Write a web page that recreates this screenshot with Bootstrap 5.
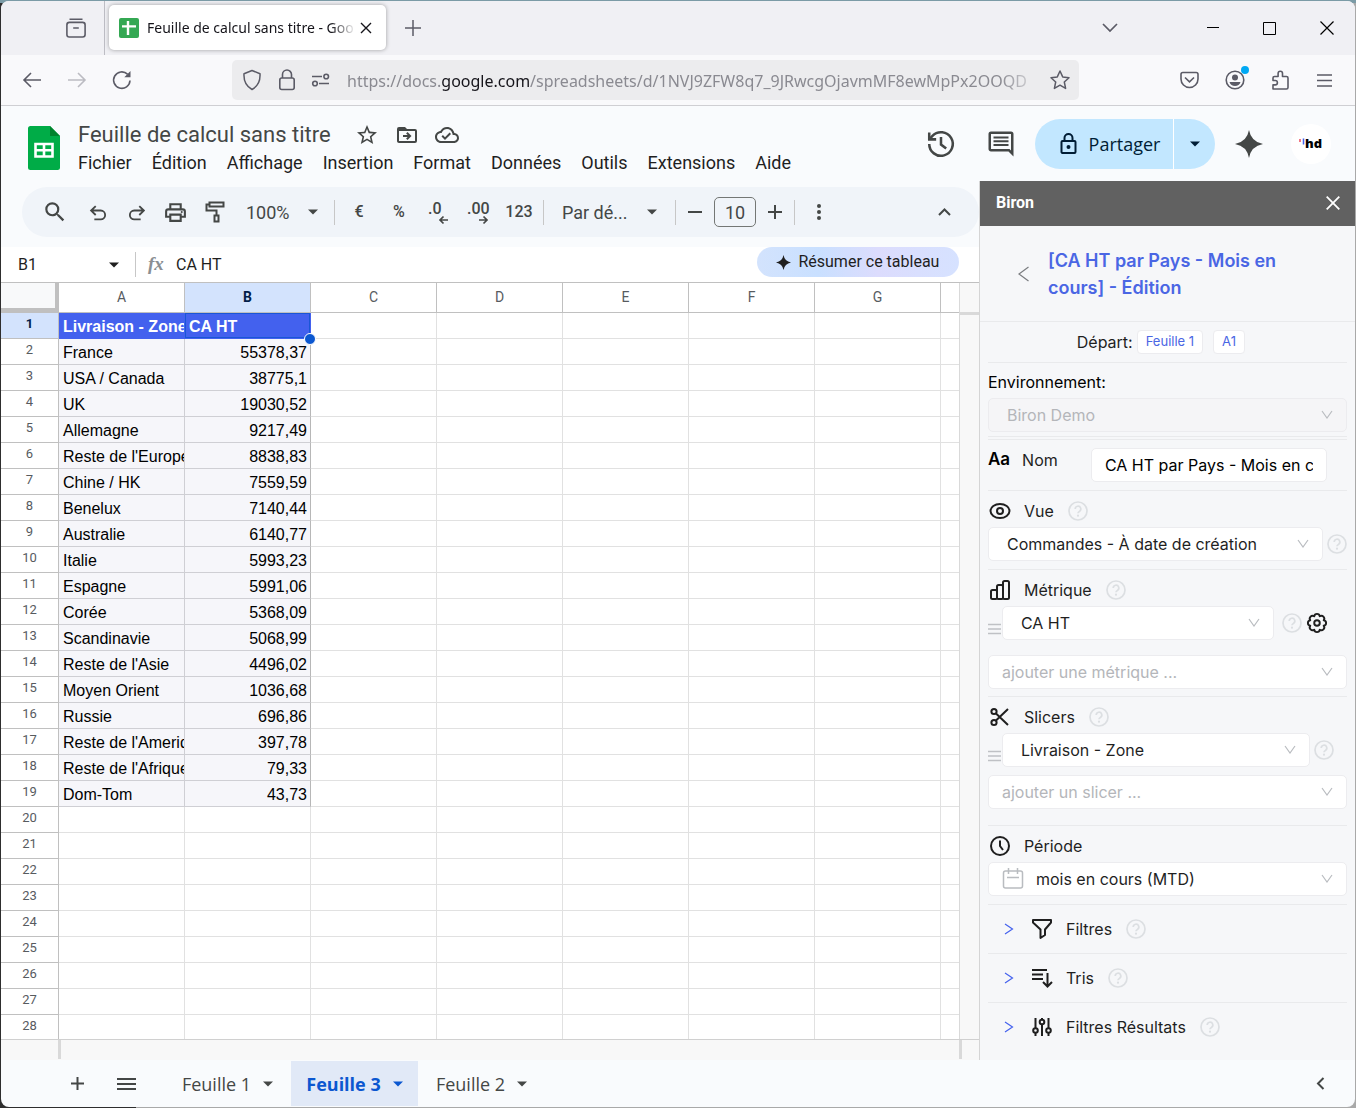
<!DOCTYPE html>
<html lang="fr">
<head>
<meta charset="utf-8">
<meta name="viewport" content="width=device-width, initial-scale=1">
<title>Feuille de calcul sans titre - Google Sheets</title>
<link href="https://cdn.jsdelivr.net/npm/bootstrap@5.3.0/dist/css/bootstrap.min.css" rel="stylesheet">
<style>
:root{--ink:#444746;--line:#e1e1e1;--blue:#4361ee;--rule:#e9eaec}
body{height:100vh;background:linear-gradient(#7b9ba6 0 3px,transparent 3px),linear-gradient(90deg,#2e2e2e 10%,#a9a9a9 10%);font-family:Roboto,"Liberation Sans",sans-serif;color:#1f1f1f;padding:1px;overflow:hidden}
svg{display:block;flex:none;overflow:visible}
button{flex:none;border:0;background:none;color:inherit;padding:0;display:inline-flex;align-items:center;justify-content:center}
select{appearance:none;border:0;background:none;color:inherit;outline:0}
.ln{fill:none;stroke:currentColor;stroke-width:2}
.window{height:100%;border-radius:8px;overflow:hidden;background:#f9fbfd}
.workarea,.namebox{min-height:0}
.shrinkable{min-width:0}
/* browser chrome */
.tabstrip{height:54px;background:#f0f0f4;color:#5b5b66}
.chrome-font{font-family:"Noto Sans","Open Sans",sans-serif}
.pinned{width:104px;border-right:1px solid #bdbdc4;padding-right:18px}
.browser-tab{width:277px;height:45px;margin:4px;border-radius:5px;background:#fff;box-shadow:0 0 4px rgba(0,0,0,.35);color:#15141a;font-size:14px;padding:0 10px}
.fade-end{overflow:hidden;white-space:nowrap;mask-image:linear-gradient(90deg,#000 88%,transparent);-webkit-mask-image:linear-gradient(90deg,#000 88%,transparent)}
.winbtn{width:57px;height:54px;color:#000}
.navstrip{height:51px;background:#f9f9fb;border-bottom:1px solid #cfcfd3;color:#5b5b66;padding:0 8px}
.navbtn{width:45px;height:40px}
.urlbar{height:40px;background:#ececee;border-radius:5px;margin-left:88px;margin-right:88px;padding:0 9px;min-width:0}
.url-text{font-size:16px;color:#8a8a91;text-decoration:none;padding-top:2px;mask-image:linear-gradient(90deg,#000 94%,transparent);-webkit-mask-image:linear-gradient(90deg,#000 94%,transparent)}
.url-text b{font-weight:400;color:#15141a}
.dot-new{position:absolute;top:6px;right:8px;width:8px;height:8px;border-radius:50%;background:#00a9f4}
/* app header */
.apphead{height:75px;padding:0 24px 0 27px}
.doc-block{margin:15px 0 0 18px;gap:2px}
.doc-title{font-size:22px;line-height:28px;color:var(--ink);margin:0;font-weight:400}
.doc-actions{color:var(--ink)}
.menus{gap:20px}
.menus a{font-size:18px;line-height:24px;color:#1f1f1f;text-decoration:none}
.roundbtn{width:52px;height:48px;color:var(--ink)}
.share{height:50px;border-radius:25px;background:#c2e7ff;color:#001d35;overflow:hidden}
.share-main{width:139px;gap:12px;padding-left:12px;font:500 18px "Open Sans",sans-serif;border-right:1px solid #fff;height:50px}
.share-more{width:41px;height:50px}
.avatar{width:40px;height:40px;border-radius:50%;background:#fff}
/* toolbar */
.toolbar-wrap{padding:0 0 10px 21px}
.toolpill{height:50px;margin-top:6px;border-radius:25px;background:#f0f4f9;color:var(--ink);padding:0 14px 0 13px;font-size:18px}
.tool{width:39px;height:36px}
.fmt{width:40px;height:36px;font-size:16px;font-weight:500}
.vsep{width:1px;height:25px;background:#c7c7c7;margin:0 4px;flex:none}
.pick{position:relative;flex:none}
.pick select{width:100%;height:100%}
.pick svg{position:absolute;right:12px;top:50%;transform:translateY(-50%);pointer-events:none}
.zoompick{width:96px;height:36px}.zoompick select{padding-left:12px}
.fontpick{width:123px;height:36px}.fontpick select{padding-left:14px}
.fontpick svg{right:14px}
.sizebox{width:42px;height:30px;border:1px solid #747775;border-radius:5px;background:none;text-align:center;color:inherit;margin:0 4px;padding:0}
/* formula bar */
.formula{height:36px;background:#fff;border-bottom:1px solid #c0c0c0;padding:0 20px 0 17px;font-size:16px}
.formula input{border:0;outline:0;background:none;padding:0;color:#1f1f1f}
.namebox{height:35px;flex:1 1 0}
.cellref{width:91px}
.summary{height:30px;width:202px;border-radius:15px;background:linear-gradient(90deg,#d3e3fd,#c9e0ff 30%,#dcdcfd 60%,#d6e2ff);gap:7px;font-size:16px;color:#1f1f1f}
/* grid */
.gridbox{flex:1 1 0;min-height:0;overflow:hidden;background:#fff}
.cells{flex:1 1 0;min-width:0;table-layout:fixed;width:100%;border-collapse:separate;border-spacing:0}
.cells .c-num{width:58px}
.cells .c-std{width:126px}
.cells th,.cells td{height:26px;padding:2px 3px 0 4px;border:solid var(--line);border-width:0 1px 1px 0;overflow:hidden;white-space:nowrap}
.cells thead th{height:30px;padding:0;line-height:27px;text-align:center;font-weight:400;font-size:14px;color:#575b5f;border-color:#c0c0c0}
.cells tbody th{font-weight:400;font-size:13px;line-height:21px;vertical-align:top;text-align:center;color:#575b5f;border-color:#c0c0c0;padding:0}
.cells td{font:16px/23px "Liberation Sans",Arial,sans-serif;color:#000}
.cells thead .corner{background:#f8f9fa;border-right:4px solid #c0c0c0;border-bottom:5px solid #c0c0c0}
.cells thead .on,.cells tbody .on{background:#d3e3fd;color:#041e49;font-weight:700}
.cells .filled{background:#f6f6fa;border-color:#cfcfd4}
.cells .num{text-align:right;border-right-color:#b7b7b7}
.cells .headcell{background:var(--blue);color:#fff;font-weight:700;border-color:var(--blue)}
.cells .picked{position:relative;overflow:visible;box-shadow:inset 0 0 0 1px #1a56d6}
.handle{position:absolute;right:-6px;bottom:-7px;width:12px;height:12px;border-radius:50%;background:#0b57d0;border:1px solid #fff;z-index:1}
.vscroll{width:20px;background:#f8f8f8;border-left:1px solid #d9d9d9;margin-left:-1px;flex:none}
.vscroll div{height:32px;border-bottom:3px solid #d9d9d9}
.hscroll{height:21px;border-top:1px solid #d0d0d0;background:#f8f8f8;padding:0 17px 0 57px}
.hscroll i{width:3px;background:#d9d9d9;height:19px}
/* side panel */
.sidebar-app{width:376px;flex:none;border-left:1px solid #d5d5d5;background:#f6f7f9;font-family:Inter,"Open Sans",sans-serif;font-size:16px}
.side-top{height:45px;background:#616161;color:#fff;font:700 16px Roboto,sans-serif;padding:0 15px 2px 16px}
.side-title{height:96px;padding:0 40px 0 38px;border-bottom:1px solid var(--rule)}
.side-title button{margin-right:18px;color:#7b7d80}
.side-title h2{font-size:18px;line-height:27px;font-weight:600;color:#4a66e4;margin:0}
.tagbtn{height:24px;background:#fff;border:1px solid #ececef;border-radius:4px;color:#4a66e4;font-size:13px;padding:0 8px}
.tagbtn+.tagbtn{margin-left:10px}
.sect{margin:0 8px;border-bottom:1px solid var(--rule);padding:8px 0}
.depart{height:41px;padding:0 102px 0 0}
.sect-env{padding:7px 0 4px;margin-bottom:2px}
.sect-nom{border-top:1px solid var(--rule)}
.sect-met{padding-bottom:7px}
.sect-sli{padding-bottom:16px}
.sect-head{height:24px;margin-bottom:4px}
.sect-head label{margin-left:12px}
.sect-head .help{margin-left:14px}
.aa{font-size:17px;font-weight:600;color:#000}
.help{color:#dcdfe2}
.field{position:relative;height:34px;flex:1 1 0;min-width:0}
.field select{width:100%;height:34px;background:#fff;border:1px solid #ececef;border-radius:5px;padding:0 40px 0 18px;opacity:1}
.field>svg{position:absolute;right:14px;top:12px;color:#b9bcc0;pointer-events:none}
.field .lead-ico{left:14px;right:auto;top:6px}
.field .ghost{color:#b4b6ba;padding-left:13px}
.field .off{background:#f5f5f7;color:#b4b6ba}
.field .dated{padding-left:47px}
.field-next{margin-top:15px}
.nomfield{width:236px;height:34px;background:#fff;border:1px solid #ececef;border-radius:5px;padding:0 13px;margin-right:20px}
.gearbtn{margin:0 19px 0 4px}
.help-end{margin:0 13px 0 4px}
.fold{height:49px;margin:0 8px;padding:0 0 1px 16px;border-bottom:1px solid var(--rule)}
.fold:last-child{border-bottom:0}
.fold a{color:#1f1f1f;text-decoration:none;margin:0 14px 0 12px}
.menugrip{width:14px;padding-top:12px;color:#bfc1c5}
/* sheet tabs */
.sheetbar{height:47px;padding:0 26px 0 56px;color:var(--ink)}
.allsheets{margin:0 18px 0 9px}
.sheet{height:45px;font:500 18px "Open Sans",sans-serif;width:127px;gap:12px;flex:none}
.sheet.current{background:#e1e9f7;color:#0b57d0;font-weight:700}
</style>
</head>
<body>
<svg width="0" height="0" class="position-absolute" aria-hidden="true"><defs>
<symbol id="help" viewBox="0 0 20 20"><g fill="none" stroke="currentColor" stroke-width="1.7"><circle cx="10" cy="10" r="9"/><path d="M7.2 8a2.8 2.8 0 1 1 4.2 2.4c-.9.5-1.4.9-1.4 1.9"/></g><circle cx="10" cy="14.7" r="1.1" fill="currentColor"/></symbol>
<symbol id="vee" viewBox="0 0 12 9"><path d="M1 1l5 7 5-7" fill="none" stroke="currentColor" stroke-width="1.2"/></symbol>
<symbol id="chev" viewBox="0 0 10 12"><path d="M1 1l7.500 5L1 11" fill="none" stroke="#4361ee" stroke-width="1.2"/></symbol>
<symbol id="tri" viewBox="0 0 10 6"><path d="M0 .5h10L5 5.5z" fill="currentColor"/></symbol>
<symbol id="grip" viewBox="0 0 13 12"><path d="M0 1.5h13M0 6h13M0 10.5h13" stroke="currentColor" stroke-width="1.4"/></symbol>
<symbol id="spark" viewBox="0 0 24 24"><path d="M12 0Q13.8 10.2 24 12 13.8 13.8 12 24 10.2 13.8 0 12 10.2 10.2 12 0z" fill="currentColor"/></symbol>
</defs></svg>

<div class="window d-flex flex-column">
  <div class="tabstrip d-flex chrome-font flex-shrink-0">
    <div class="pinned d-flex align-items-center flex-shrink-0 justify-content-end"><button aria-label="Onglets récents"><svg width="20" height="20" viewBox="0 0 20 20" fill="none" stroke="currentColor" stroke-width="1.6"><path d="M3.5 1.2h13"/><rect x=".9" y="4.4" width="18.2" height="14.6" rx="2.5"/><path d="M7.2 10h5.6"/></svg></button></div>
    <div class="browser-tab d-flex align-items-center flex-shrink-0">
      <svg width="20" height="20" viewBox="0 0 20 20"><rect width="20" height="20" rx="2" fill="#34a853"/><path d="M9 3v14M3 8.4h14" stroke="#fff" stroke-width="2.4" fill="none"/></svg>
      <span class="fade-end flex-fill ms-2">Feuille de calcul sans titre - Goo</span>
      <button aria-label="Fermer l’onglet" class="ms-1 me-1"><svg width="12" height="12" viewBox="0 0 12 12" stroke="currentColor" stroke-width="1.4"><path d="M1 1l10 10M11 1L1 11"/></svg></button>
    </div>
    <button aria-label="Nouvel onglet" class="navbtn h-100"><svg width="16" height="16" viewBox="0 0 16 16" stroke="currentColor" stroke-width="1.5"><path d="M8 0v16M0 8h16"/></svg></button>
    <button aria-label="Lister les onglets" class="navbtn h-100 ms-auto me-5"><svg width="16" height="10" viewBox="0 0 16 10" fill="none" stroke="currentColor" stroke-width="1.7"><path d="M1 1l7 7 7-7"/></svg></button>
    <button aria-label="Réduire" class="winbtn ms-1"><svg width="12" height="12" viewBox="0 0 12 12" stroke="currentColor"><path d="M0 5.5h12"/></svg></button>
    <button aria-label="Agrandir" class="winbtn"><svg width="13" height="13" viewBox="0 0 13 13" stroke="currentColor" fill="none"><path d="M.5.5h12v12H.5z"/></svg></button>
    <button aria-label="Fermer" class="winbtn"><svg width="14" height="14" viewBox="0 0 14 14" stroke="currentColor" stroke-width="1.2"><path d="M.5.5l13 13M13.5.5l-13 13"/></svg></button>
  </div>

  <div class="navstrip d-flex align-items-center chrome-font flex-shrink-0">
    <button aria-label="Précédent" class="navbtn"><svg width="18" height="16" viewBox="0 0 18 16" fill="none" stroke="currentColor" stroke-width="1.6"><path d="M18 8H1M8 1L1 8l7 7"/></svg></button>
    <button aria-label="Suivant" class="navbtn" disabled><svg width="18" height="16" viewBox="0 0 18 16" fill="none" stroke="#bcbcc2" stroke-width="1.6"><path d="M0 8h17M10 1l7 7-7 7"/></svg></button>
    <button aria-label="Actualiser" class="navbtn"><svg width="20" height="20" viewBox="0 0 20 20" fill="none" stroke="currentColor" stroke-width="1.6"><path d="M18 10.5A8.2 8.2 0 1 1 15.5 4.2"/><path d="M18.5 1v6.2h-6.2z" fill="currentColor" stroke="none"/></svg></button>
    <div class="urlbar d-flex align-items-center flex-fill">
      <svg width="22" height="22" viewBox="0 0 22 22" fill="none" stroke="currentColor" stroke-width="1.5"><path stroke-linejoin="round" d="M11 1.5l8 3.2c.4 6.500-2 12.500-8 15.800C5 17.200 2.600 11.200 3 4.700z"/></svg>
      <svg class="ms-3" width="16" height="22" viewBox="0 0 16 22" fill="none" stroke="currentColor" stroke-width="1.6"><rect x=".8" y="9" width="14.4" height="11.5" rx="2"/><path d="M3.5 9V5.5a4.5 4.5 0 0 1 9 0V9"/></svg>
      <svg class="ms-3 me-3" width="20" height="14" viewBox="0 0 20 14" fill="none" stroke="currentColor" stroke-width="1.6"><path d="M1 3.5h10M8 10.5h10"/><circle cx="15.2" cy="3.5" r="2.3"/><circle cx="4" cy="10.5" r="2.3"/></svg>
      <a class="url-text fade-end flex-fill" href="#">https://docs.<b>google.com</b>/spreadsheets/d/1NVJ9ZFW8q7_9JRwcgOjavmMF8ewMpPx2OOQD</a>
      <button aria-label="Ajouter aux favoris" class="ms-2"><svg width="20" height="20" viewBox="0 0 20 20" fill="none" stroke="currentColor" stroke-width="1.5" stroke-linejoin="round"><path d="M10 1l2.700 5.900 6.300.8-4.700 4.300 1.300 6.400L10 15.200l-5.600 3.200L5.700 12 1 7.700l6.300-.8z"/></svg></button>
    </div>
    <button aria-label="Pocket" class="navbtn"><svg width="19" height="18" viewBox="0 0 19 18" fill="none" stroke="currentColor" stroke-width="1.6"><path d="M2.800 1.500h13.400c1 0 1.800.7 1.800 1.700V8a8.500 8.500 0 0 1-17 0V3.200c0-1 .8-1.700 1.800-1.700z"/><path d="M5 6.500l4.500 4.300L14 6.500"/></svg></button>
    <button aria-label="Compte" class="navbtn position-relative"><svg width="20" height="20" viewBox="0 0 20 20"><circle cx="10" cy="10" r="8.8" fill="none" stroke="currentColor" stroke-width="1.6"/><circle cx="10" cy="7.5" r="3" fill="currentColor"/><path d="M4.500 12h11c-.6 2.600-2.900 4-5.500 4s-4.900-1.400-5.500-4z" fill="currentColor"/></svg><span class="dot-new"></span></button>
    <button aria-label="Extensions" class="navbtn"><svg width="18" height="20" viewBox="0 0 18 20" fill="none" stroke="currentColor" stroke-width="1.6" stroke-linejoin="round"><path d="M2 19h13.500c.9 0 1.500-.6 1.500-1.500V8c0-.9-.6-1.500-1.500-1.500H11.500V3.500a2.200 2.200 0 0 0-4.400 0v3H3.500C2.600 6.500 2 7.100 2 8v2.500h2.200a2.200 2.200 0 0 1 0 4.400H2z"/></svg></button>
    <button aria-label="Menu" class="navbtn"><svg width="15" height="13" viewBox="0 0 15 13" stroke="currentColor" stroke-width="1.4"><path d="M0 1h15M0 6.500h15M0 12h15"/></svg></button>
  </div>

  <header class="apphead d-flex align-items-center flex-shrink-0">
    <svg width="32" height="44" viewBox="0 0 32 44" class="mt-2"><path d="M2.500 0H22l10 10v31.500a2.500 2.500 0 0 1-2.500 2.500h-27A2.500 2.500 0 0 1 0 41.500v-39A2.500 2.500 0 0 1 2.500 0z" fill="#00ac47"/><path d="M22 0l10 10H22z" fill="#00832d"/><path d="M7.500 18h17v12.500h-17zM7.500 24.200h17M16 18v12.500" fill="none" stroke="#fff" stroke-width="2.6"/></svg>
    <div class="doc-block d-flex flex-column align-self-start">
      <div class="d-flex align-items-center">
        <h1 class="doc-title text-nowrap me-4">Feuille de calcul sans titre</h1>
        <div class="doc-actions d-flex gap-3">
          <button aria-label="Suivre"><svg width="24" height="24" viewBox="0 0 24 24" fill="currentColor"><path d="M22 9.240l-7.190-.620L12 2 9.190 8.630 2 9.240l5.460 4.730L5.820 21 12 17.270 18.180 21l-1.630-7.030L22 9.240zM12 15.400l-3.760 2.270 1-4.280-3.320-2.880 4.380-.38L12 6.100l1.710 4.040 4.380.38-3.320 2.880 1 4.280L12 15.400z"/></svg></button>
          <button aria-label="Déplacer"><svg width="24" height="24" viewBox="0 0 24 24" fill="currentColor"><path d="M20 6h-8l-2-2H4a2 2 0 0 0-2 2v12c0 1.100.9 2 2 2h16a2 2 0 0 0 2-2V8a2 2 0 0 0-2-2zm0 12H4V8h16v10zM12.500 17l4-4-4-4-1.400 1.400 1.600 1.600H8v2h4.700l-1.600 1.600z"/></svg></button>
          <button aria-label="État de l’enregistrement"><svg width="24" height="24" viewBox="0 0 24 24" fill="currentColor"><path d="M19.350 10.040C18.670 6.590 15.640 4 12 4 9.110 4 6.600 5.640 5.350 8.040 2.340 8.360 0 10.910 0 14c0 3.310 2.690 6 6 6h13c2.760 0 5-2.240 5-5 0-2.640-2.050-4.780-4.650-4.960zM19 18H6c-2.210 0-4-1.790-4-4 0-2.050 1.530-3.760 3.560-3.970l1.070-.11.5-.95C8.080 7.140 9.940 6 12 6c2.620 0 4.880 1.860 5.390 4.430l.3 1.500 1.530.11c1.560.1 2.780 1.410 2.780 2.960 0 1.650-1.350 3-3 3zm-9-3.820l-2.090-2.090L6.500 13.500 10 17l6.010-6.010-1.410-1.410z"/></svg></button>
        </div>
      </div>
      <nav class="menus d-flex">
        <a href="#">Fichier</a><a href="#">Édition</a><a href="#">Affichage</a><a href="#">Insertion</a><a href="#">Format</a><a href="#">Données</a><a href="#">Outils</a><a href="#">Extensions</a><a href="#">Aide</a>
      </nav>
    </div>
    <div class="d-flex align-items-center ms-auto">
      <button class="roundbtn me-2" aria-label="Historique"><svg width="30" height="30" viewBox="0 0 26 26" fill="none" stroke="currentColor" stroke-width="2.2"><path d="M2.800 13a10.200 10.200 0 1 0 2.800-7L3.200 8.600"/><path d="M2.800 3v6h6"/><path d="M13 7v6.500l4.500 3.500"/></svg></button>
      <button class="roundbtn me-2" aria-label="Commentaires"><svg width="30" height="30" viewBox="0 0 24 24" fill="currentColor"><path d="M22 4a2 2 0 0 0-2-2H4a2 2 0 0 0-2 2v12c0 1.100.9 2 2 2h14l4 4zM20 4v13.200L18.800 16H4V4zM6 12h12v1.600H6zm0-3h12v1.600H6zm0-3h12v1.600H6z"/></svg></button>
      <div class="share d-flex">
        <button class="share-main"><svg width="17" height="21" viewBox="4 1 16 21" fill="currentColor"><path d="M18 8h-1V6A5 5 0 0 0 7 6v2H6a2 2 0 0 0-2 2v10c0 1.100.9 2 2 2h12a2 2 0 0 0 2-2V10a2 2 0 0 0-2-2zM9 6a3 3 0 0 1 6 0v2H9zm9 14H6V10h12zm-6-3a2 2 0 1 0 0-4 2 2 0 0 0 0 4z"/></svg>Partager</button>
        <button class="share-more" aria-label="Options de partage"><svg width="10" height="6"><use href="#tri"/></svg></button>
      </div>
      <button class="roundbtn ms-2 me-3" aria-label="Gemini"><svg width="28" height="28"><use href="#spark"/></svg></button>
      <button class="avatar" aria-label="Compte Google"><svg width="26" height="18" viewBox="0 0 26 18"><path d="M2 4v3" stroke="#ef4a5a" stroke-width="1.5"/><path d="M5.500 3.500v6" stroke="#4361ee" stroke-width="1.5"/><text x="7" y="13" font-family="Open Sans,sans-serif" font-weight="800" font-size="13">hd</text></svg></button>
    </div>
  </header>

  <div class="workarea d-flex flex-fill">
    <main class="shrinkable d-flex flex-column flex-fill">
      <div class="toolbar-wrap">
        <div class="toolpill d-flex align-items-center">
          <button class="tool me-1" aria-label="Rechercher"><svg width="26" height="26" viewBox="0 0 24 24" fill="currentColor"><path d="M15.500 14h-.79l-.28-.27A6.470 6.470 0 0 0 16 9.500 6.500 6.500 0 1 0 9.500 16c1.610 0 3.090-.59 4.230-1.570l.27.28v.79l5 4.990L20.490 19zm-6 0a4.500 4.500 0 1 1 0-9 4.500 4.500 0 0 1 0 9z"/></svg></button>
          <button class="tool" aria-label="Annuler"><svg width="22" height="22" viewBox="0 0 24 24" class="ln"><path d="M8 20h7a4.800 4.800 0 0 0 0-9.600H5M9.500 5.500l-5 4.900 5 4.900"/></svg></button>
          <button class="tool" aria-label="Rétablir"><svg width="22" height="22" viewBox="0 0 24 24" class="ln"><path d="M16 20H9a4.800 4.800 0 0 1 0-9.600h10M14.500 5.500l5 4.900-5 4.900"/></svg></button>
          <button class="tool" aria-label="Imprimer"><svg width="25" height="25" viewBox="0 0 24 24" fill="currentColor"><path d="M19 8h-1V3H6v5H5a3 3 0 0 0-3 3v6h4v4h12v-4h4v-6a3 3 0 0 0-3-3zM8 5h8v3H8zm8 12v2H8v-4h8zm2-2v-2H6v2H4v-4c0-.55.45-1 1-1h14c.55 0 1 .45 1 1v4z"/><circle cx="18" cy="11.500" r="1"/></svg></button>
          <button class="tool" aria-label="Reproduire la mise en forme"><svg width="22" height="24" viewBox="0 0 22 24" class="ln"><path d="M5.500 2.500h14v4h-14zM5.500 4.500H2.500v6h10v5M10.500 15.500h4v6h-4z"/></svg></button>
          <div class="pick zoompick"><select aria-label="Zoom"><option>100%</option></select><svg width="10" height="6"><use href="#tri"/></svg></div>
          <span class="vsep"></span>
          <button class="fmt">€</button>
          <button class="fmt">%</button>
          <button class="fmt" aria-label="Réduire les décimales"><svg width="24" height="26" viewBox="0 0 24 26" class="ln"><text x="1" y="15" font-family="Roboto,sans-serif" font-weight="500" font-size="16" fill="currentColor" stroke="none">.0</text><path d="M21 21h-8M16.500 17.500L13 21l3.500 3.500" stroke-width="1.7"/></svg></button>
          <button class="fmt" aria-label="Augmenter les décimales"><svg width="24" height="26" viewBox="0 0 24 26" class="ln"><text x="0" y="15" font-family="Roboto,sans-serif" font-weight="500" font-size="16" fill="currentColor" stroke="none">.00</text><path d="M12 21h8M16.500 17.500L20 21l-3.500 3.500" stroke-width="1.7"/></svg></button>
          <button class="fmt">123</button>
          <span class="vsep"></span>
          <div class="pick fontpick"><select aria-label="Police"><option>Par dé...</option></select><svg width="10" height="6"><use href="#tri"/></svg></div>
          <span class="vsep"></span>
          <button class="px-2" aria-label="Réduire la taille"><svg width="14" height="14" viewBox="0 0 14 14" class="ln"><path d="M0 7h14"/></svg></button>
          <input class="sizebox" aria-label="Taille de police" value="10">
          <button class="px-2" aria-label="Augmenter la taille"><svg width="14" height="14" viewBox="0 0 14 14" class="ln"><path d="M0 7h14M7 0v14"/></svg></button>
          <span class="vsep ms-1"></span>
          <button class="fmt" aria-label="Plus"><svg width="6" height="18" viewBox="0 0 6 18" fill="currentColor"><circle cx="3" cy="3" r="2"/><circle cx="3" cy="9" r="2"/><circle cx="3" cy="15" r="2"/></svg></button>
          <button class="fmt ms-auto" aria-label="Masquer les menus"><svg width="13" height="8" viewBox="0 0 13 8" class="ln"><path d="M1 7l5.500-5.500L12 7"/></svg></button>
        </div>
      </div>
      <div class="formula d-flex flex-shrink-0">
        <div class="namebox shrinkable d-flex align-items-center">
          <input class="cellref" aria-label="Zone de nom" value="B1"><svg width="10" height="6"><use href="#tri"/></svg>
          <span class="vsep ms-3 me-2"></span>
          <svg width="20" height="20" viewBox="0 0 20 20" class="ms-1"><text x="0" y="15" font-family="Liberation Serif,serif" font-style="italic" font-weight="700" font-size="19" fill="#8b8f93">fx</text></svg>
          <input class="ms-2 flex-fill shrinkable" aria-label="Formule" value="CA HT">
        </div>
        <button class="summary"><svg width="15" height="15"><use href="#spark"/></svg>Résumer ce tableau</button>
      </div>
      <div class="gridbox d-flex align-items-start">
        <table class="cells"><colgroup><col class="c-num"><col span="7" class="c-std"><col></colgroup>
          <thead><tr><th class="corner"></th><th>A</th><th class="on">B</th><th>C</th><th>D</th><th>E</th><th>F</th><th>G</th><th></th></tr></thead>
          <tbody id="rows"></tbody>
        </table>
        <div class="vscroll align-self-stretch"><div></div></div>
      </div>
      <div class="hscroll d-flex justify-content-between flex-shrink-0"><i></i><i></i></div>
    </main>

    <aside class="sidebar-app d-flex flex-column">
      <div class="side-top d-flex align-items-center justify-content-between flex-shrink-0">Biron<button aria-label="Fermer le panneau"><svg width="14" height="14" viewBox="0 0 14 14" stroke="currentColor" stroke-width="1.8"><path d="M.7.7l12.600 12.600M13.300.7L.7 13.300"/></svg></button></div>
      <div class="side-title d-flex align-items-center flex-shrink-0"><button aria-label="Retour"><svg width="12" height="14" viewBox="0 0 12 14" fill="none" stroke="currentColor" stroke-width="1.2"><path d="M10.500 0L1 7l9.500 7"/></svg></button><h2 class="text-nowrap">[CA HT par Pays - Mois en<br>cours] - Édition</h2></div>
      <div class="sect depart d-flex align-items-center justify-content-end flex-shrink-0"><span class="me-1">Départ:</span><button class="tagbtn">Feuille 1</button><button class="tagbtn">A1</button></div>
      <div class="sect sect-env">
        <div class="sect-head d-flex align-items-center text-black"><label for="env" class="ms-0">Environnement:</label></div>
        <div class="field"><select id="env" class="off" disabled><option>Biron Demo</option></select><svg width="12" height="9"><use href="#vee"/></svg></div>
      </div>
      <div class="sect sect-nom d-flex align-items-start justify-content-between"><div class="sect-head d-flex align-items-center mb-0"><span class="aa">Aa</span><label for="nom">Nom</label></div><input id="nom" class="nomfield" value="CA HT par Pays - Mois en cours"></div>
      <div class="sect">
        <div class="sect-head d-flex align-items-center"><svg width="24" height="20" viewBox="0 0 24 20" class="ln"><ellipse cx="12" cy="10" rx="9.500" ry="7"/><circle cx="12" cy="10" r="3"/></svg><label for="vue">Vue</label><svg class="help" width="20" height="20"><use href="#help"/></svg></div>
        <div class="d-flex align-items-center"><div class="field"><select id="vue"><option>Commandes - À date de création</option></select><svg width="12" height="9"><use href="#vee"/></svg></div><svg class="help ms-1" width="20" height="20"><use href="#help"/></svg></div>
      </div>
      <div class="sect sect-met">
        <div class="sect-head d-flex align-items-center"><svg width="24" height="22" viewBox="0 0 24 22" class="ln"><rect x="3" y="11" width="6" height="9" rx="1.500"/><rect x="9" y="6" width="6" height="14" rx="1.500"/><rect x="15" y="2" width="6" height="18" rx="1.500"/></svg><label for="met">Métrique</label><svg class="help" width="20" height="20"><use href="#help"/></svg></div>
        <div class="d-flex align-items-center"><span class="menugrip"><svg width="13" height="12"><use href="#grip"/></svg></span><div class="field"><select id="met"><option>CA HT</option></select><svg width="12" height="9"><use href="#vee"/></svg></div><svg class="help ms-2" width="20" height="20"><use href="#help"/></svg><button class="gearbtn" aria-label="Réglages de la métrique"><svg width="22" height="22" viewBox="-11.500 -11.500 23 23" class="ln"><path stroke-linejoin="round" d="M7 2.900A2.930 2.930 0 0 1 2.900 7 2.930 2.930 0 0 1-2.900 7 2.930 2.930 0 0 1-7 2.900 2.930 2.930 0 0 1-7-2.900 2.930 2.930 0 0 1-2.900-7 2.930 2.930 0 0 1 2.900-7 2.930 2.930 0 0 1 7-2.900 2.930 2.930 0 0 1 7 2.900z"/><circle r="2.900"/></svg></button></div>
        <div class="field field-next"><select class="ghost" aria-label="Ajouter une métrique"><option>ajouter une métrique ...</option></select><svg width="12" height="9"><use href="#vee"/></svg></div>
      </div>
      <div class="sect sect-sli">
        <div class="sect-head d-flex align-items-center"><svg width="24" height="22" viewBox="0 0 24 22" class="ln"><circle cx="6" cy="5.500" r="2.600"/><circle cx="6" cy="16.500" r="2.600"/><path d="M8 7.500L20 19M8 14.500L20 3"/></svg><label for="sli">Slicers</label><svg class="help" width="20" height="20"><use href="#help"/></svg></div>
        <div class="d-flex align-items-center"><span class="menugrip"><svg width="13" height="12"><use href="#grip"/></svg></span><div class="field"><select id="sli"><option>Livraison - Zone</option></select><svg width="12" height="9"><use href="#vee"/></svg></div><svg class="help help-end" width="20" height="20"><use href="#help"/></svg></div>
        <div class="field mt-2"><select class="ghost" aria-label="Ajouter un slicer"><option>ajouter un slicer ...</option></select><svg width="12" height="9"><use href="#vee"/></svg></div>
      </div>
      <div class="sect">
        <div class="sect-head d-flex align-items-center"><svg width="24" height="22" viewBox="0 0 24 22" class="ln"><circle cx="12" cy="11" r="9"/><path d="M12 5.500V11l3 4"/></svg><label for="per">Période</label></div>
        <div class="field"><select id="per" class="dated"><option>mois en cours (MTD)</option></select><svg class="lead-ico" width="22" height="21" viewBox="0 0 22 21" fill="none" stroke="currentColor" stroke-width="1.5"><rect x="1.500" y="3" width="19" height="17" rx="2"/><path d="M6.500 0v6M15.500 0v6M5 9.500h12"/></svg><svg width="12" height="9"><use href="#vee"/></svg></div>
      </div>
      <div class="fold d-flex align-items-center"><svg width="10" height="12" class="me-3"><use href="#chev"/></svg><svg width="24" height="24" viewBox="0 0 24 24" class="ln"><path stroke-linejoin="round" d="M3 3h18v2.500l-6 7V18l-4.500 3v-8.500L3 5.500z"/></svg><a href="#">Filtres</a><svg class="help" width="20" height="20"><use href="#help"/></svg></div>
      <div class="fold d-flex align-items-center"><svg width="10" height="12" class="me-3"><use href="#chev"/></svg><svg width="24" height="24" viewBox="0 0 24 24" class="ln"><path d="M2 4h15M2 8.500h11M2 13h11M17.500 7v13.500M13 16l4.500 4.500L22 16"/></svg><a href="#">Tris</a><svg class="help" width="20" height="20"><use href="#help"/></svg></div>
      <div class="fold d-flex align-items-center"><svg width="10" height="12" class="me-3"><use href="#chev"/></svg><svg width="24" height="24" viewBox="0 0 24 24" class="ln"><path d="M5.500 3v10M5.500 18v3M12 3v1.500M12 9.500V21M18.500 3v10M18.500 18v3"/><circle cx="5.500" cy="15.500" r="2.300"/><circle cx="12" cy="7" r="2.300"/><circle cx="18.500" cy="15.500" r="2.300"/></svg><a href="#">Filtres Résultats</a><svg class="help" width="20" height="20"><use href="#help"/></svg></div>
    </aside>
  </div>

  <footer class="sheetbar d-flex align-items-center flex-shrink-0">
    <button class="fmt" aria-label="Ajouter une feuille"><svg width="13" height="13" viewBox="0 0 13 13" class="ln"><path d="M0 6.500h13M6.500 0v13"/></svg></button>
    <button class="fmt allsheets" aria-label="Toutes les feuilles"><svg width="19" height="14" viewBox="0 0 19 14" class="ln"><path d="M0 2h19M0 7h19M0 12h19"/></svg></button>
    <button class="sheet">Feuille 1<svg width="10" height="6"><use href="#tri"/></svg></button>
    <button class="sheet current">Feuille 3<svg width="10" height="6"><use href="#tri"/></svg></button>
    <button class="sheet">Feuille 2<svg width="10" height="6"><use href="#tri"/></svg></button>
    <button class="ms-auto p-1" aria-label="Panneau latéral"><svg width="9" height="13" viewBox="0 0 9 13" class="ln"><path d="M7.500 1L2 6.500 7.500 12"/></svg></button>
  </footer>
</div>
<script>
const data=[["France","55378,37"],["USA / Canada","38775,1"],["UK","19030,52"],["Allemagne","9217,49"],["Reste de l'Europe","8838,83"],["Chine / HK","7559,59"],["Benelux","7140,44"],["Australie","6140,77"],["Italie","5993,23"],["Espagne","5991,06"],["Corée","5368,09"],["Scandinavie","5068,99"],["Reste de l'Asie","4496,02"],["Moyen Orient","1036,68"],["Russie","696,86"],["Reste de l'Amerique","397,78"],["Reste de l'Afrique","79,33"],["Dom-Tom","43,73"]];
let html='<tr><th class="on">1</th><td class="headcell">Livraison - Zone</td><td class="headcell picked">CA HT<span class="handle"></span></td>'+'<td></td>'.repeat(6)+'</tr>';
for(let r=2;r<=28;r++){const d=data[r-2];html+='<tr><th>'+r+'</th>'+(d?'<td class="filled">'+d[0]+'</td><td class="filled num">'+d[1]+'</td>':'<td></td><td></td>')+'<td></td>'.repeat(6)+'</tr>';}
document.getElementById('rows').innerHTML=html;
</script>
<script src="https://cdn.jsdelivr.net/npm/bootstrap@5.3.0/dist/js/bootstrap.bundle.min.js"></script>
</body>
</html>
